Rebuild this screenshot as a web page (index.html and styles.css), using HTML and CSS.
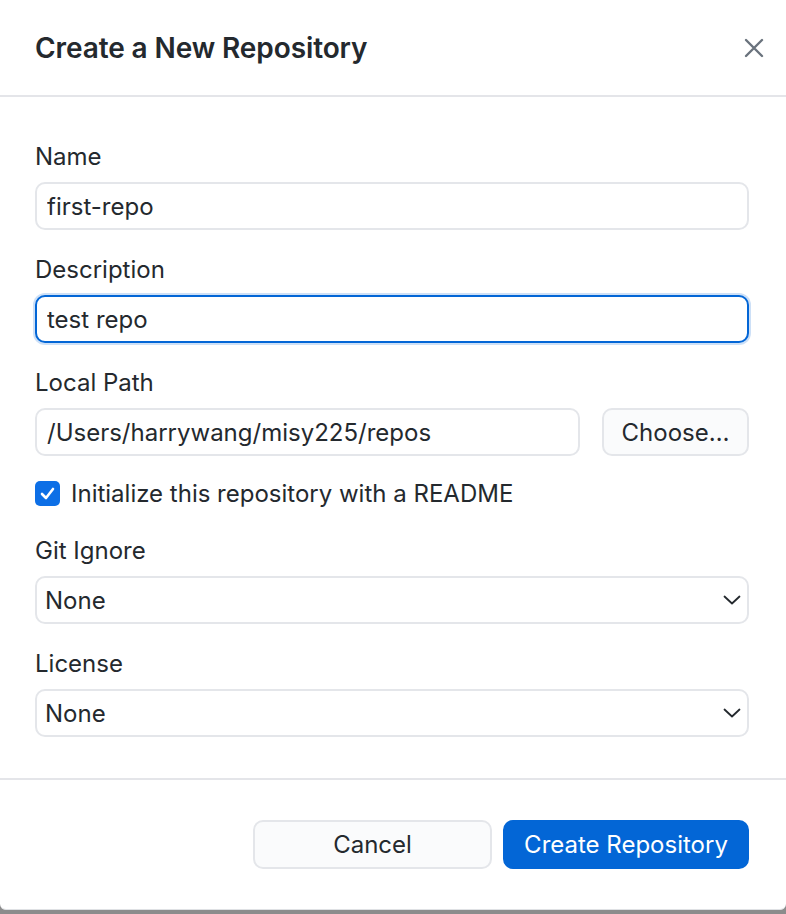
FILE: index.html
```html
<!DOCTYPE html>
<html lang="en">
<head>
    <meta charset="UTF-8">
    <meta name="viewport" content="width=device-width, initial-scale=1.0">
    <title>Create a New Repository</title>
    <link rel="stylesheet" href="styles.css">
</head>
<body>
    <div class="dialog">
        <div class="dialog-header">
            <h1>Create a New Repository</h1>
            <button class="close-button" aria-label="Close">
                <svg width="20" height="20" viewBox="0 0 20 20">
                    <path d="M2 2 L18 18 M18 2 L2 18" stroke="#6a737d" stroke-width="2.4" stroke-linecap="round" fill="none"/>
                </svg>
            </button>
        </div>

        <div class="dialog-content">
            <label class="field-label" for="repoName">Name</label>
            <input class="text-box" id="repoName" type="text" value="first-repo">

            <label class="field-label" for="repoDescription">Description</label>
            <input class="text-box focused" id="repoDescription" type="text" value="test repo">

            <label class="field-label" for="repoPath">Local Path</label>
            <div class="path-row">
                <input class="text-box" id="repoPath" type="text" value="/Users/harrywang/misy225/repos">
                <button class="button">Choose…</button>
            </div>

            <div class="checkbox-row">
                <span class="checkbox">
                    <svg width="17" height="17" viewBox="0 0 17 17">
                        <path d="M3 9 L7 13 L14 4" stroke="white" stroke-width="2.6" stroke-linecap="round" stroke-linejoin="round" fill="none"/>
                    </svg>
                </span>
                <span class="checkbox-label">Initialize this repository with a README</span>
            </div>

            <label class="field-label" for="gitIgnore">Git Ignore</label>
            <div class="select" id="gitIgnore">
                <span>None</span>
                <svg width="18" height="10" viewBox="0 0 18 10">
                    <path d="M1.5 1.5 L9 8.5 L16.5 1.5" stroke="#24292e" stroke-width="1.8" stroke-linecap="round" stroke-linejoin="round" fill="none"/>
                </svg>
            </div>

            <label class="field-label" for="license">License</label>
            <div class="select last" id="license">
                <span>None</span>
                <svg width="18" height="10" viewBox="0 0 18 10">
                    <path d="M1.5 1.5 L9 8.5 L16.5 1.5" stroke="#24292e" stroke-width="1.8" stroke-linecap="round" stroke-linejoin="round" fill="none"/>
                </svg>
            </div>
        </div>

        <div class="dialog-footer">
            <button class="button cancel">Cancel</button>
            <button class="button primary">Create Repository</button>
        </div>
    </div>
</body>
</html>
```

FILE: styles.css
```css
body {
    margin: 0;
    font-family: Inter, "Noto Sans", sans-serif;
    color: #24292e;
    background-color: #8c8c8c;
}
.dialog {
    background: white;
    height: 909px;
    border-bottom: 1px solid #dfe1e4;
    border-radius: 0 0 6px 6px;
    display: flex;
    flex-direction: column;
}
.dialog-header {
    height: 95px;
    border-bottom: 2px solid #e4e5e9;
    display: flex;
    align-items: center;
    justify-content: space-between;
    padding: 0 22px 0 35px;
}
.dialog-header h1 {
    margin: 0;
    font-size: 28px;
    font-weight: 600;
    letter-spacing: -0.1px;
}
.close-button {
    border: none;
    background: none;
    padding: 0;
    width: 20px;
    height: 20px;
    margin-top: 1px;
    cursor: pointer;
}
.dialog-content {
    display: flex;
    flex-direction: column;
    padding: 46px 37px 41px 35px;
    border-bottom: 2px solid #e4e5e9;
}
.field-label {
    font-size: 24px;
    line-height: 28px;
    margin-bottom: 11px;
}
.text-box {
    box-sizing: border-box;
    height: 48px;
    font-family: inherit;
    font-size: 24px;
    color: #24292e;
    padding: 0 10px;
    border: 2px solid #e4e6ea;
    border-radius: 10px;
    outline: none;
    margin-bottom: 26px;
}
.text-box.focused {
    border-color: #0366d6;
    box-shadow: 0 0 0 2px rgba(3, 102, 214, 0.2);
}
.path-row {
    display: flex;
    gap: 22px;
}
.path-row .text-box {
    flex: 1;
    margin-bottom: 0;
}
.button {
    box-sizing: border-box;
    height: 49px;
    font-family: inherit;
    font-size: 24px;
    color: #24292e;
    background-color: #fafbfc;
    border: 2px solid #e4e6ea;
    border-radius: 10px;
    padding: 0 16px;
    cursor: pointer;
}
.path-row .button {
    width: 147px;
    height: 48px;
}
.checkbox-row {
    display: flex;
    align-items: center;
    gap: 11px;
    margin: 25px 0 31px;
}
.checkbox {
    width: 25px;
    height: 25px;
    border-radius: 5px;
    background-color: #0d6fe6;
    display: flex;
    align-items: center;
    justify-content: center;
}
.checkbox-label {
    font-size: 24px;
    line-height: 25px;
}
.select {
    box-sizing: border-box;
    height: 48px;
    border: 2px solid #e4e6ea;
    border-radius: 10px;
    display: flex;
    align-items: center;
    justify-content: space-between;
    padding: 0 6px 0 8px;
    font-size: 24px;
    margin-bottom: 26px;
}
.select.last {
    margin-bottom: 0;
}
.dialog-footer {
    flex: 1;
    display: flex;
    justify-content: flex-end;
    align-items: flex-start;
    gap: 11px;
    padding: 40px 37px 0 0;
}
.cancel {
    width: 239px;
}
.primary {
    width: 246px;
    background-color: #0366d6;
    border-color: #0366d6;
    color: white;
}
```
